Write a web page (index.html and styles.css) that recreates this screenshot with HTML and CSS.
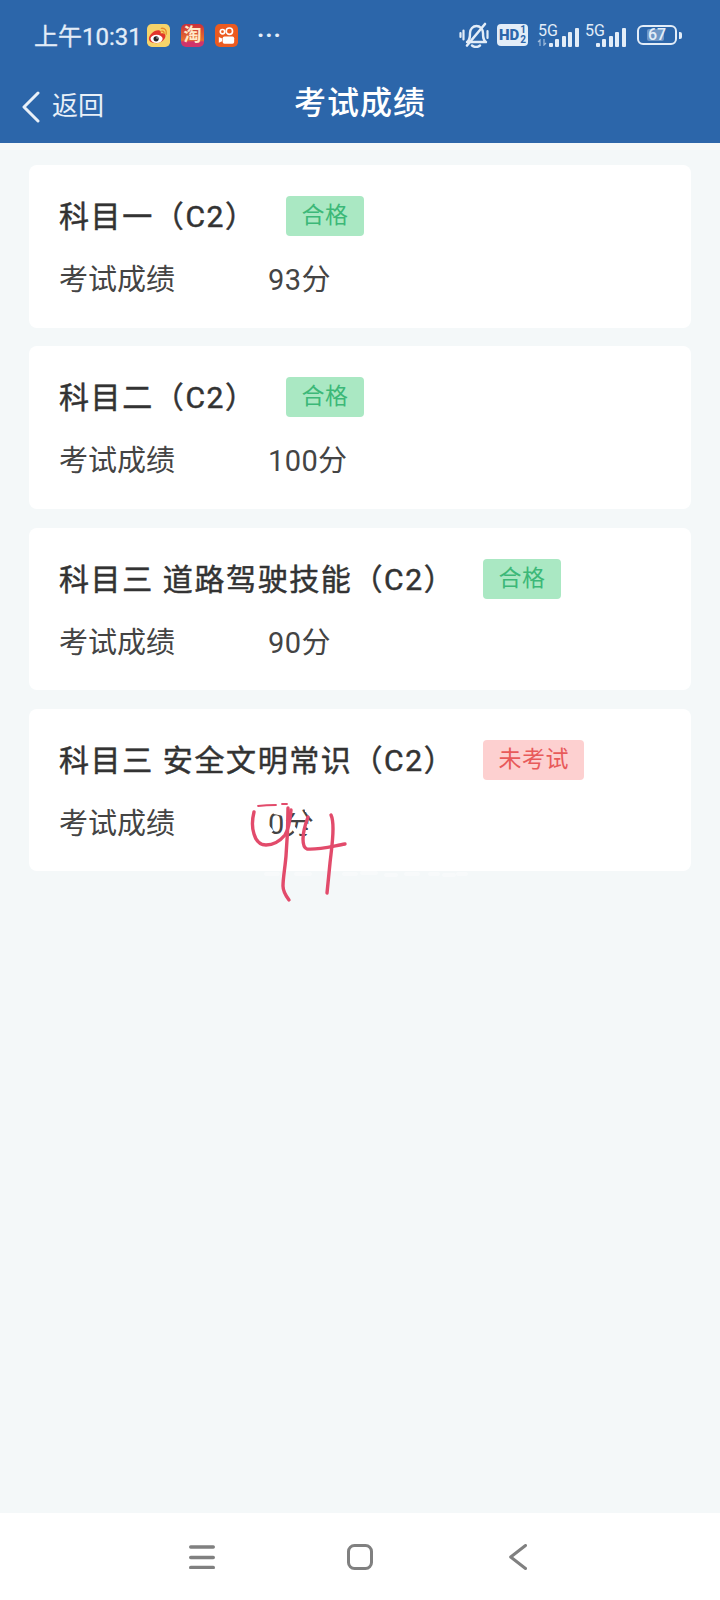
FILE: index.html
```html
<!DOCTYPE html>
<html lang="zh-CN">
<head>
    <meta charset="UTF-8">
    <meta name="viewport" content="width=device-width, initial-scale=1.0">
    <title>考试成绩</title>
    <link rel="stylesheet" href="styles.css">
</head>
<body>
    <div class="page">
        <div class="top">
            <div class="status-bar">
                <span class="time">上午10:31</span>
                <svg class="app-icon weibo" viewBox="0 0 24 24">
                    <rect width="24" height="24" rx="5" fill="#f6d36a"/>
                    <path d="M2 15.500c0-4 5-9 9.500-9 3.500 0 3 2.500 2.800 3.500 2.500-.8 5-.2 5 2.300 0 4-4.800 7.700-9.800 7.700-4 0-7.500-1.500-7.500-4.500z" fill="#e2352b"/>
                    <ellipse cx="10" cy="15.500" rx="6.300" ry="4.300" fill="#fff"/>
                    <circle cx="9.500" cy="15.500" r="2.700" fill="#222"/>
                    <circle cx="10.500" cy="14.500" r=".7" fill="#fff"/>
                    <path d="M15 4.500c3.500-.5 6 2 5 6M15.500 7.500c1.500-.2 2.500 1 2.200 2.500" fill="none" stroke="#e8892c" stroke-width="1.400" stroke-linecap="round"/>
                </svg>
                <span class="app-icon taobao">淘</span>
                <svg class="app-icon kuaishou" viewBox="0 0 24 24">
                    <rect width="24" height="24" rx="5" fill="#ec5a1f"/>
                    <circle cx="7.800" cy="8" r="2.300" fill="none" stroke="#fff" stroke-width="1.700"/>
                    <circle cx="15" cy="7.500" r="3.300" fill="none" stroke="#fff" stroke-width="1.700"/>
                    <rect x="8" y="13" width="12" height="7.500" rx="1.800" fill="#fff"/>
                    <path d="M7.500 15l-3.500-1.500v6L7.500 18z" fill="#fff"/>
                </svg>
                <span class="dots">···</span>
                <div class="status-right">
                    <svg class="mute" width="30" height="26" viewBox="0 0 30 26" fill="none" stroke="#e3edf8" stroke-linecap="round" stroke-linejoin="round">
                        <path d="M8 20c3-2 3-5 3-9 0-4 3-7 6.500-7s6.500 3 6.500 7c0 4 0 7 3 9z" stroke-width="2.400"/>
                        <path d="M13 23.500q4 3 8 0" stroke-width="2.400"/>
                        <path d="M8 23.500L26 2" stroke-width="2.600"/>
                        <path d="M1.500 11v4M4.500 8.500v9M28.500 9v7" stroke-width="2.200"/>
                    </svg>
                    <span class="hd">HD<span class="hd-sub">1<br>2</span></span>
                    <div class="signal first">
                        <span class="five-g">5G</span>
                        <svg class="arrows" width="10" height="7" viewBox="0 0 10 7" fill="none" stroke="#9fbcdc" stroke-width="1.200"><path d="M3 7V1L1 3M7 0v6l2-2"/></svg>
                        <div class="bars"><i class="b1"></i><i class="b2"></i><i class="b3"></i><i class="b4"></i><i class="b5"></i></div>
                    </div>
                    <div class="signal">
                        <span class="five-g">5G</span>
                        <div class="bars"><i class="b1"></i><i class="b2"></i><i class="b3"></i><i class="b4"></i><i class="b5"></i></div>
                    </div>
                    <div class="battery"><div class="battery-fill"></div><span class="battery-num">67</span></div>
                    <div class="battery-cap"></div>
                </div>
            </div>
            <div class="nav-bar">
                <div class="back">
                    <svg width="20" height="32" viewBox="0 0 20 32" fill="none" stroke="#e9f0f8" stroke-width="3" stroke-linecap="round" stroke-linejoin="round"><path d="M17 2L3 16l14 14"/></svg>
                    <span class="back-text">返回</span>
                </div>
                <div class="nav-title">考试成绩</div>
            </div>
        </div>

        <div class="list">
            <div class="card">
                <div class="card-head"><span class="card-title short">科目一（C2）</span><span class="tag pass">合格</span></div>
                <div class="score"><span class="score-label">考试成绩</span><span class="score-value">93分</span></div>
            </div>
            <div class="card">
                <div class="card-head"><span class="card-title short">科目二（C2）</span><span class="tag pass">合格</span></div>
                <div class="score"><span class="score-label">考试成绩</span><span class="score-value">100分</span></div>
            </div>
            <div class="card">
                <div class="card-head"><span class="card-title">科目三 道路驾驶技能（C2）</span><span class="tag pass">合格</span></div>
                <div class="score"><span class="score-label">考试成绩</span><span class="score-value">90分</span></div>
            </div>
            <div class="card">
                <div class="card-head"><span class="card-title">科目三 安全文明常识（C2）</span><span class="tag fail">未考试</span></div>
                <div class="score"><span class="score-label">考试成绩</span><span class="score-value">0分</span></div>
            </div>
        </div>

        <div class="bottom-bar">
            <svg width="26" height="24" viewBox="0 0 26 24" fill="none" stroke="#808080" stroke-width="3.400" stroke-linecap="round"><path d="M1.700 2h22.600M1.700 12.500h22.600M1.700 22.500h22.600"/></svg>
            <svg width="26" height="26" viewBox="0 0 26 26" fill="none" stroke="#808080" stroke-width="3"><rect x="1.500" y="1.500" width="23" height="23" rx="6"/></svg>
            <svg class="sys-back" width="18" height="26" viewBox="0 0 18 26" fill="none" stroke="#808080" stroke-width="3" stroke-linecap="round" stroke-linejoin="round"><path d="M16.500 1.500L1.700 13l14.800 11.500"/></svg>
        </div>

        <!-- handwriting on top of the photo, with the white smears under it -->
        <svg class="scribble" width="720" height="1600" viewBox="0 0 720 1600" fill="none">
            <g stroke="#fff" stroke-width="4">
                <path d="M255 809h36M274 812l10 2M267 826l5 6"/>
                <path d="M292 826l6 8M304 824l12 6M304 832h12M292 811h8M305 810h6"/>
            </g>
            <g stroke="#fff" stroke-width="4" opacity=".35" stroke-linecap="round">
                <path d="M266 874h12M284 873v4M296 874h14M344 874h12M362 873h14M386 875h10M406 874h12M430 874h8M444 875h10M458 874h8"/>
            </g>
            <g stroke="#e24b6b" stroke-width="3.400" stroke-linecap="round" stroke-linejoin="round">
                <path d="M254 812c-2 8-2 16 0 22 2 7 6 11 12 11 8 0 14-4 19-10 4-6 5-14 6-25"/>
                <path d="M258 806c8-1 14-1 18-1M282 804h5" stroke-width="1.800"/>
                <path d="M288 808c0 22-1 36-2 48-1 12-3 22-3 30 0 6 3 10 6 14"/>
                <path d="M308 817c-3 8-5 16-5 22 0 6 1 9 4 10 12 1 26-3 38-5"/>
                <path d="M331 815c2 4 2 8 2 14 0 12-2 24-3 34-1 10-2 20-3 30"/>
            </g>
        </svg>
    </div>
</body>
</html>
```

FILE: styles.css
```css
* {
    box-sizing: border-box;
}
body {
    margin: 0;
    font-family: Roboto, "Noto Sans CJK SC", sans-serif;
    background-color: #f4f8f9;
    color: #333;
}
.page {
    position: relative;
    display: flex;
    flex-direction: column;
    height: 1600px;
    overflow: hidden;
}
.top {
    height: 143px;
    background-color: #2c66aa;
    color: #fff;
}

/* status bar */
.status-bar {
    display: flex;
    align-items: center;
    height: 70px;
    padding-left: 34px;
    color: #e3edf8;
}
.time {
    width: 113px;
    margin-bottom: 2px;
    font-size: 24px;
    white-space: nowrap;
    -webkit-text-stroke: .3px currentColor;
}
.app-icon {
    display: block;
    flex: none;
    width: 23px;
    height: 23px;
    margin-right: 11px;
}
.taobao {
    border-radius: 5px;
    background: linear-gradient(#c8303c, #e8702c 70%, #d0356a 78%);
    color: #ffe9c8;
    font-size: 18px;
    line-height: 22px;
    text-align: center;
    font-weight: 700;
}
.dots {
    margin-left: 8px;
    font-size: 24px;
    font-weight: 700;
    letter-spacing: 1px;
    line-height: 1;
}
.status-right {
    display: flex;
    align-items: center;
    margin-left: auto;
    padding-right: 38px;
}
.mute {
    margin-right: 8px;
}
.hd {
    display: flex;
    align-items: center;
    justify-content: center;
    width: 31px;
    height: 22px;
    margin-right: 9px;
    border-radius: 4px;
    background-color: #e3edf8;
    color: #2c66aa;
    font-size: 15px;
    font-weight: 900;
    line-height: 1;
}
.hd-sub {
    margin-left: 1px;
    font-size: 10px;
    line-height: 10px;
    font-weight: 700;
}
.signal {
    position: relative;
    width: 42px;
    height: 24px;
    margin-right: 5px;
}
.five-g {
    position: absolute;
    left: 1px;
    top: -2px;
    font-size: 16px;
}
.arrows {
    position: absolute;
    left: 0;
    bottom: 1px;
}
.bars {
    position: absolute;
    right: 0;
    bottom: 0;
    display: flex;
    align-items: flex-end;
    gap: 2.600px;
}
.bars i {
    display: block;
    width: 4px;
    border-radius: 1px;
    background-color: #e3edf8;
}
.bars .b1 { height: 4px; }
.bars .b2 { height: 8px; }
.bars .b3 { height: 11px; }
.bars .b4 { height: 15px; }
.bars .b5 { height: 19px; }
.battery {
    position: relative;
    width: 40px;
    height: 20px;
    margin-left: 6px;
    border: 2px solid #e3edf8;
    border-radius: 6px;
}
.battery-fill {
    position: absolute;
    left: 8px;
    top: 2px;
    bottom: 2px;
    width: 17px;
    border-radius: 2px;
    background-color: #6f97c6;
}
.battery-num {
    position: absolute;
    left: 0;
    right: 0;
    top: 0;
    text-align: center;
    font-size: 16px;
    line-height: 16px;
    font-weight: 500;
}
.battery-cap {
    width: 3px;
    height: 7px;
    margin-left: 2px;
    border-radius: 0 2px 2px 0;
    background-color: #e3edf8;
}

/* title row */
.nav-bar {
    position: relative;
    display: flex;
    align-items: center;
    justify-content: center;
    height: 73px;
    padding-bottom: 14px;
}
.back {
    position: absolute;
    left: 21px;
    top: 15px;
    display: flex;
    align-items: center;
    gap: 11px;
    font-size: 26px;
    color: #e9f0f8;
}
.back-text {
    padding-bottom: 7px;
}
.nav-title {
    font-size: 32px;
    font-weight: 500;
    letter-spacing: 1px;
}

/* score cards */
.list {
    flex: 1;
    display: flex;
    flex-direction: column;
    gap: 18.800px;
    padding: 22px 29px;
}
.card {
    flex: none;
    height: 162.500px;
    padding: 31px 30px 0;
    border-radius: 8px;
    background-color: #fff;
}
.card-head {
    display: flex;
    align-items: center;
    height: 40px;
}
.card-title {
    flex: none;
    width: 424px;
    padding-bottom: 4px;
    font-size: 30px;
    letter-spacing: 1.600px;
    white-space: nowrap;
    -webkit-text-stroke: .5px currentColor;
}
.card-title.short {
    width: 227px;
}
.tag {
    height: 40px;
    padding: 0 15px 0 15.500px;
    border-radius: 4px;
    font-size: 23px;
    letter-spacing: .5px;
    line-height: 40px;
}
.pass {
    background-color: #aae8c3;
    color: #3cb878;
}
.fail {
    background-color: #fdd0d0;
    color: #e85a5a;
}
.score {
    display: flex;
    align-items: center;
    height: 40px;
    margin-top: 21px;
    font-size: 29px;
    color: #444;
}
.score-label {
    width: 209px;
}
.score-value {
    letter-spacing: .4px;
}

/* system buttons */
.bottom-bar {
    display: flex;
    align-items: center;
    gap: 132px;
    height: 87px;
    padding-left: 189px;
    background-color: #fff;
}
.sys-back {
    margin-left: 4px;
}

.scribble {
    position: absolute;
    left: 0;
    top: 0;
    pointer-events: none;
}
```
